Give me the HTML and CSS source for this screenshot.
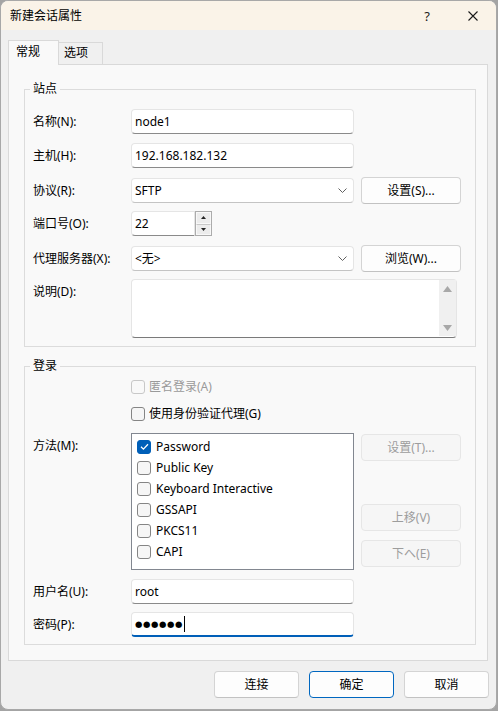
FILE: index.html
```html
<!doctype html>
<html>
<head>
    <meta charset="utf-8">
    <title>新建会话属性</title>
    <link rel="stylesheet" href="styles.css">
</head>
<body>
<div class="window">
    <div class="titlebar">
        <span class="title">新建会话属性</span>
        <span class="caption-btn help">?</span>
        <span class="caption-btn close">
            <svg width="10" height="10" viewBox="0 0 10 10"><path d="M0.5 0.5 L9.5 9.5 M9.5 0.5 L0.5 9.5" stroke="#1a1a1a" stroke-width="1.1" fill="none"/></svg>
        </span>
    </div>

    <div class="dialog-body">
        <div class="tabs">
            <div class="tab tab-active">常规</div>
            <div class="tab">选项</div>
        </div>

        <div class="panel">
            <fieldset class="group group-site">
                <legend>站点</legend>
                <div class="rows">
                    <div class="row">
                        <span class="label">名称(N):</span>
                        <div class="edit">node1</div>
                    </div>
                    <div class="row">
                        <span class="label">主机(H):</span>
                        <div class="edit">192.168.182.132</div>
                    </div>
                    <div class="row">
                        <span class="label">协议(R):</span>
                        <div class="edit combo">SFTP
                            <svg class="chevron" width="9" height="5" viewBox="0 0 9 5"><path d="M0.5 0.5 L4.5 4.5 L8.5 0.5" stroke="#606060" stroke-width="1" fill="none"/></svg>
                        </div>
                        <div class="btn">设置(S)...</div>
                    </div>
                    <div class="row">
                        <span class="label">端口号(O):</span>
                        <div class="port">
                            <div class="edit port-edit">22</div>
                            <div class="spin">
                                <div class="spin-btn"><svg width="5" height="3" viewBox="0 0 5 3"><polygon points="0,3 2.5,0 5,3" fill="#222"/></svg></div>
                                <div class="spin-btn"><svg width="5" height="3" viewBox="0 0 5 3"><polygon points="0,0 2.5,3 5,0" fill="#222"/></svg></div>
                            </div>
                        </div>
                    </div>
                    <div class="row">
                        <span class="label">代理服务器(X):</span>
                        <div class="edit combo">&lt;无&gt;
                            <svg class="chevron" width="9" height="5" viewBox="0 0 9 5"><path d="M0.5 0.5 L4.5 4.5 L8.5 0.5" stroke="#606060" stroke-width="1" fill="none"/></svg>
                        </div>
                        <div class="btn">浏览(W)...</div>
                    </div>
                    <div class="row row-desc">
                        <span class="label label-top">说明(D):</span>
                        <div class="edit memo">
                            <div class="scrollbar">
                                <svg width="9" height="6" viewBox="0 0 9 6"><polygon points="0,6 4.5,0 9,6" fill="#a8a8a8"/></svg>
                                <svg width="9" height="6" viewBox="0 0 9 6"><polygon points="0,0 4.5,6 9,0" fill="#a8a8a8"/></svg>
                            </div>
                        </div>
                    </div>
                </div>
            </fieldset>

            <fieldset class="group group-login">
                <legend>登录</legend>
                <div class="row row-check row-anon">
                    <span class="label"></span>
                    <div class="check-item disabled"><span class="checkbox"></span>匿名登录(A)</div>
                </div>
                <div class="row row-check row-agent">
                    <span class="label"></span>
                    <div class="check-item"><span class="checkbox"></span>使用身份验证代理(G)</div>
                </div>
                <div class="row row-method">
                    <span class="label label-top">方法(M):</span>
                    <div class="listbox">
                        <div class="list-item"><span class="checkbox checked"><svg width="11" height="11" viewBox="0 0 11 11"><path d="M2 5.8 L4.4 8.1 L9 3.2" stroke="#fff" stroke-width="1.3" fill="none"/></svg></span>Password</div>
                        <div class="list-item"><span class="checkbox"></span>Public Key</div>
                        <div class="list-item"><span class="checkbox"></span>Keyboard Interactive</div>
                        <div class="list-item"><span class="checkbox"></span>GSSAPI</div>
                        <div class="list-item"><span class="checkbox"></span>PKCS11</div>
                        <div class="list-item"><span class="checkbox"></span>CAPI</div>
                    </div>
                    <div class="side-buttons">
                        <div class="btn disabled">设置(T)...</div>
                        <div class="btn disabled btn-up">上移(V)</div>
                        <div class="btn disabled btn-down">下へ(E)</div>
                    </div>
                </div>
                <div class="row row-user">
                    <span class="label">用户名(U):</span>
                    <div class="edit">root</div>
                </div>
                <div class="row row-pass">
                    <span class="label">密码(P):</span>
                    <div class="edit edit-focus"><span class="dots">●●●●●●</span><span class="caret"></span></div>
                </div>
            </fieldset>
        </div>

        <div class="footer">
            <div class="btn btn-footer">连接</div>
            <div class="btn btn-footer btn-default">确定</div>
            <div class="btn btn-footer">取消</div>
        </div>
    </div>
</div>
</body>
</html>
```

FILE: styles.css
```css
body {
    margin: 0;
    background: #a4a4a4;
    font-family: "Noto Sans", "Noto Sans CJK SC", sans-serif;
    font-size: 12px;
    line-height: 16px;
    color: #000;
}

.window {
    width: 497px;
    height: 710px;
    box-sizing: border-box;
    border: 1px solid #a8a8a8;
    border-radius: 8px;
    background: #f0f0f0;
    overflow: hidden;
}

.titlebar {
    height: 29px;
    background: #faf3e8;
    display: flex;
    align-items: center;
}

.title {
    padding-left: 9px;
    flex: 1;
}

.caption-btn {
    width: 46px;
    height: 29px;
    display: flex;
    align-items: center;
    justify-content: center;
}

.help {
    font-size: 13px;
    color: #1a1a1a;
}

.dialog-body {
    padding: 0 7px;
}

.tabs {
    margin-top: 10px;
    display: flex;
    align-items: flex-end;
}

.tab {
    box-sizing: border-box;
    height: 22px;
    width: 44px;
    padding: 2px 0 0 5px;
    border: 1px solid #d9d9d9;
    border-left: 0;
    border-bottom: 0;
    background: #f0f0f0;
}

.tab-active {
    position: relative;
    z-index: 1;
    height: 25px;
    width: 51px;
    margin-bottom: -1px;
    padding: 3px 0 0 7px;
    border-left: 1px solid #d9d9d9;
    background: #f9f9f9;
}

.panel {
    margin-right: 1px;
    border: 1px solid #d9d9d9;
    background: #f9f9f9;
    padding: 16px 11px 15px 15px;
}

.group {
    margin: 0;
    border: 1px solid #dcdcdc;
    padding: 12px 14px 8px 8px;
    min-width: 0;
}

.group legend {
    padding: 0 3px;
    margin-left: -3px;
    line-height: 16px;
}

.group-login {
    margin-top: 11px;
    padding-top: 3px;
    padding-bottom: 7px;
}

.rows {
    display: flex;
    flex-direction: column;
    gap: 9px;
}

.row {
    display: grid;
    grid-template-columns: 91px 223px 100px;
    column-gap: 7px;
    align-items: center;
    height: 25px;
}

.label {
    white-space: nowrap;
}

.label-top {
    align-self: start;
    padding-top: 5px;
}

.edit {
    box-sizing: border-box;
    height: 25px;
    background: #fff;
    border: 1px solid #e5e5e5;
    border-bottom-color: #8a8a8a;
    border-radius: 4px;
    padding: 0 3px;
    line-height: 23px;
    position: relative;
}

.combo {
    display: flex;
    align-items: center;
    justify-content: space-between;
    padding-right: 6px;
    border-bottom-color: #c4c4c4;
}

.btn {
    box-sizing: border-box;
    height: 27px;
    background: #fdfdfd;
    border: 1px solid #d4d4d4;
    border-bottom-color: #c2c2c2;
    border-radius: 4px;
    display: flex;
    align-items: center;
    justify-content: center;
}

.btn.disabled {
    background: #f6f6f6;
    border-color: #e6e6e6;
    color: #9d9d9d;
}

.port {
    display: flex;
}

.port-edit {
    width: 64px;
    border-radius: 4px 0 0 4px;
}

.spin {
    box-sizing: border-box;
    width: 17px;
    height: 25px;
    border: 1px solid #acacac;
    display: flex;
    flex-direction: column;
}

.spin-btn {
    flex: 1;
    background: #ececec;
    border: 1px solid #f8f8f8;
    display: flex;
    align-items: center;
    justify-content: center;
}

.spin-btn + .spin-btn {
    border-top: 1px solid #c8c8c8;
}

.row-desc {
    height: 59px;
    align-items: stretch;
}

.memo {
    grid-column: 2 / 4;
    width: 326px;
    height: 59px;
    border-bottom-color: #7a7a7a;
    display: flex;
    justify-content: flex-end;
    padding: 0 0 1px 0;
}

.scrollbar {
    width: 17px;
    background: #f0f0f0;
    display: flex;
    flex-direction: column;
    align-items: center;
    justify-content: space-between;
    padding: 6px 0 5px;
}

.row-check {
    height: 20px;
}

.row-agent {
    margin-top: 7px;
}

.check-item {
    display: flex;
    align-items: center;
    gap: 4px;
    white-space: nowrap;
}

.check-item.disabled {
    color: #9a9a9a;
}

.checkbox {
    box-sizing: border-box;
    width: 14px;
    height: 14px;
    border: 1px solid #858585;
    border-radius: 3px;
    background: #f6f6f6;
    display: flex;
    align-items: center;
    justify-content: center;
    flex: none;
}

.disabled .checkbox {
    border-color: #c8c8c8;
    background: #f9f9f9;
}

.checkbox.checked {
    background: #005fb8;
    border-color: #005fb8;
}

.row-method {
    margin-top: 9px;
    height: 137px;
    align-items: start;
}

.listbox {
    box-sizing: border-box;
    height: 137px;
    background: #fff;
    border: 1px solid #828790;
    padding: 2px 0 0 5px;
}

.list-item {
    height: 21px;
    display: flex;
    align-items: center;
    gap: 5px;
}

.side-buttons {
    display: flex;
    flex-direction: column;
    padding-top: 1px;
}

.btn-up {
    margin-top: 43px;
}

.btn-down {
    margin-top: 9px;
}

.row-user {
    margin-top: 9px;
}

.row-pass {
    margin-top: 8px;
}

.edit-focus {
    border-bottom: 2px solid #005fb8;
    display: flex;
    align-items: center;
}

.dots {
    font-family: "DejaVu Sans", sans-serif;
    font-size: 8.5px;
    letter-spacing: 0.6px;
    line-height: 16px;
}

.caret {
    width: 1px;
    height: 16px;
    background: #000;
    margin-left: 1px;
}

.footer {
    margin-top: 10px;
    display: flex;
    justify-content: flex-end;
    gap: 10px;
}

.btn-footer {
    width: 85px;
}

.btn-default {
    border-color: #0067c0;
}
```
